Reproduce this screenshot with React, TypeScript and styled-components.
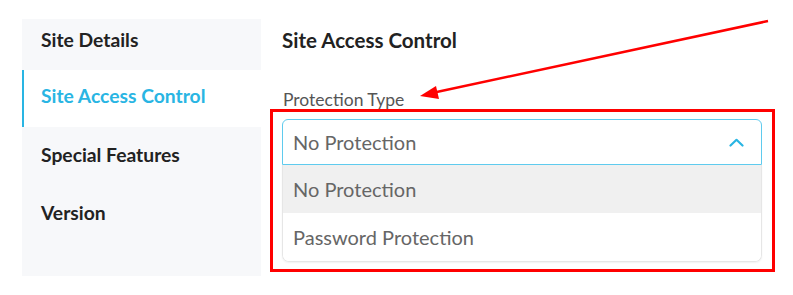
import React from "react";
import styled, { createGlobalStyle } from "styled-components";

const Global = createGlobalStyle`
  html, body { margin: 0; padding: 0; background: #ffffff; }
  body { font-family: Lato, "Open Sans", sans-serif; }
`;

const Page = styled.div`
  position: relative;
  width: 793px;
  height: 295px;
  display: flex;
  align-items: flex-start;
  gap: 21px;
  padding: 19px 0 0 22px;
  box-sizing: border-box;
  overflow: hidden;
`;

const Sidebar = styled.nav`
  width: 239px;
  height: 257px;
  background: #f7f8fa;
  display: flex;
  flex-direction: column;
`;

const NavItem = styled.div<{ $active?: boolean; $h: number; $pt: number }>`
  height: ${(p) => p.$h}px;
  padding: ${(p) => p.$pt}px 0 0 17px;
  box-sizing: border-box;
  font-size: 19.3px;
  line-height: 24px;
  font-weight: 700;
  color: ${(p) => (p.$active ? "#29b5e3" : "#222222")};
  background: ${(p) => (p.$active ? "#ffffff" : "transparent")};
  border-left: 2px solid ${(p) => (p.$active ? "#29b5e3" : "transparent")};
`;

const Content = styled.section`
  width: 480px;
  display: flex;
  flex-direction: column;
`;

const Heading = styled.h2`
  margin: 9px 0 0 0;
  font-size: 20.5px;
  line-height: 24px;
  font-weight: 700;
  color: #222222;
`;

const Label = styled.div`
  margin: 37px 0 9px 0;
  padding-left: 1px;
  font-size: 17.5px;
  line-height: 21px;
  color: #555555;
`;

const SelectBox = styled.div`
  height: 46px;
  box-sizing: border-box;
  border: 1.5px solid #5fcbee;
  border-radius: 6px 6px 0 0;
  display: flex;
  align-items: center;
  justify-content: space-between;
  padding: 0 17px 0 10px;
  font-size: 20px;
  color: #666666;
`;

const Menu = styled.div`
  border: 1px solid #e6e6e6;
  border-top: none;
  border-radius: 0 0 7px 7px;
  box-shadow: 0 1px 2px rgba(0, 0, 0, 0.06);
  overflow: hidden;
`;

const Option = styled.div<{ $hover?: boolean }>`
  height: 48px;
  display: flex;
  align-items: center;
  padding-left: 10px;
  font-size: 20px;
  color: #666666;
  background: ${(p) => (p.$hover ? "#f0f0f0" : "#ffffff")};
`;

const RedBox = styled.div`
  position: absolute;
  left: 270px;
  top: 109px;
  width: 505px;
  height: 163px;
  box-sizing: border-box;
  border: 3px solid #ff0000;
  pointer-events: none;
`;

const Overlay = styled.svg`
  position: absolute;
  left: 0;
  top: 0;
  pointer-events: none;
`;

const Chevron = () => (
  <svg width="15" height="9" viewBox="0 0 15 9">
    <path d="M1.5 7.5 L7.5 1.8 L13.5 7.5" fill="none" stroke="#29b5e3" strokeWidth="2.2" strokeLinecap="round" strokeLinejoin="round" />
  </svg>
);

export default function App() {
  return (
    <>
      <Global />
      <Page>
        <Sidebar>
          <NavItem $h={51} $pt={8.5}>Site Details</NavItem>
          <NavItem $active $h={57} $pt={13.5}>Site Access Control</NavItem>
          <NavItem $h={58} $pt={15.5}>Special Features</NavItem>
          <NavItem $h={58} $pt={15.5}>Version</NavItem>
        </Sidebar>
        <Content>
          <Heading>Site Access Control</Heading>
          <Label>Protection Type</Label>
          <SelectBox>
            <span>No Protection</span>
            <Chevron />
          </SelectBox>
          <Menu>
            <Option $hover>No Protection</Option>
            <Option>Password Protection</Option>
          </Menu>
        </Content>
        <RedBox />
        <Overlay width="793" height="295" viewBox="0 0 793 295">
          <line x1="768" y1="21" x2="432" y2="93" stroke="#ff0000" strokeWidth="2.5" />
          <polygon points="420,96 436,86 439,99" fill="#ff0000" />
        </Overlay>
      </Page>
    </>
  );
}
